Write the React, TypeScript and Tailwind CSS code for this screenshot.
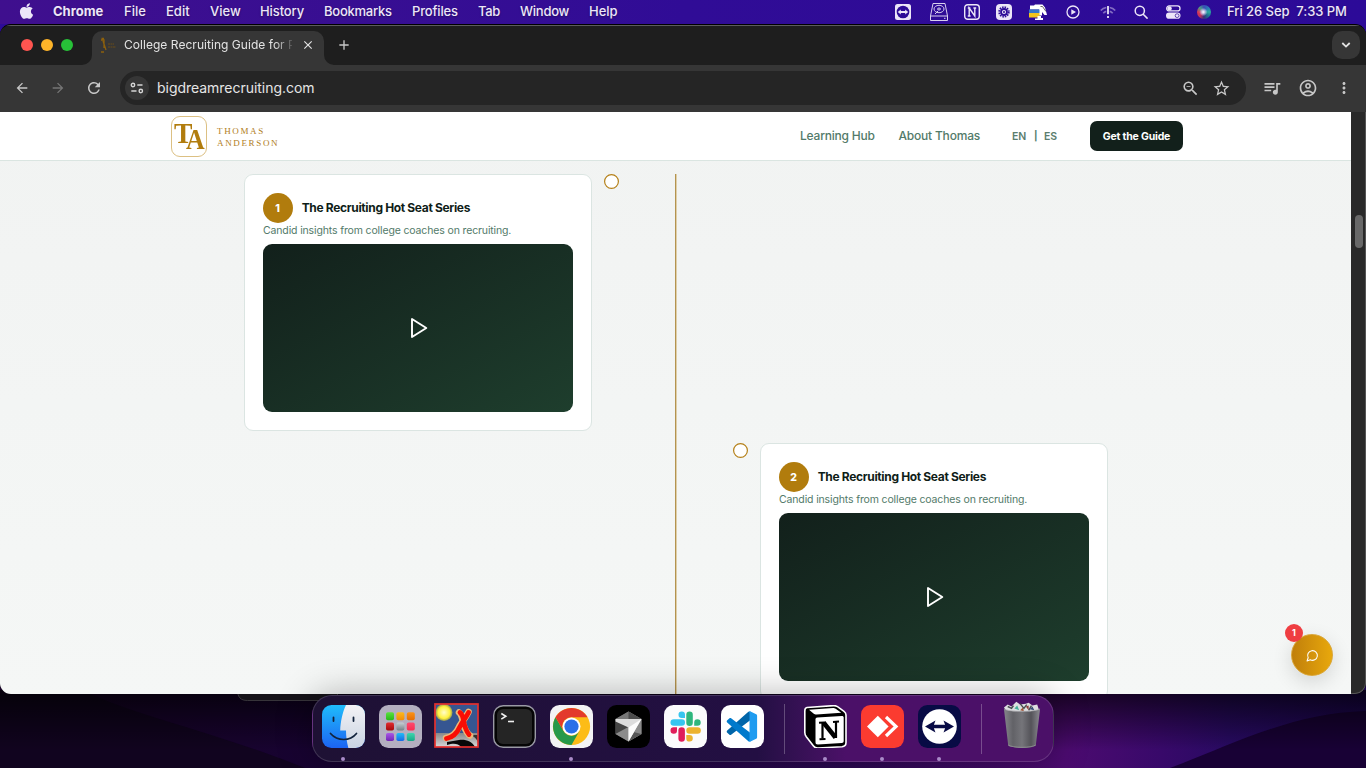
import type { ReactNode } from 'react';
import { FaApple } from 'react-icons/fa';
import {
  MdArrowBack,
  MdArrowForward,
  MdRefresh,
  MdQueueMusic,
  MdOutlineZoomOut,
  MdStarOutline,
  MdOutlineAccountCircle,
  MdMoreVert,
  MdClose,
  MdAdd,
} from 'react-icons/md';

function MenuBar() {
  return (
    <div className="flex h-6 shrink-0 items-center bg-linear-to-r from-[#3f0f8e] via-[#300c96] to-[#2c0a98] text-[13px] font-medium text-[#ece6f8] [text-shadow:0_1px_2px_rgba(0,0,0,0.35)]">
      <FaApple className="mb-0.5 ml-[19px] h-[18px] w-[15px] text-[#ece6f8]" />
      <div className="ml-[19px] flex">
        <span className="w-[71px] font-bold">Chrome</span>
        <span className="w-[42px]">File</span>
        <span className="w-[44px]">Edit</span>
        <span className="w-[50px]">View</span>
        <span className="w-16 tracking-[-0.1px]">History</span>
        <span className="w-[88px] tracking-[-0.25px]">Bookmarks</span>
        <span className="w-[66px] tracking-[-0.15px]">Profiles</span>
        <span className="w-[42px] tracking-[-0.3px]">Tab</span>
        <span className="w-[69px] tracking-[-0.25px]">Window</span>
        <span>Help</span>
      </div>
      <div className="ml-auto flex items-center text-[#ece6f8]">
        <svg width="16" height="16" viewBox="0 0 16 16">
          <rect width="16" height="16" rx="2.5" fill="#ece6f8" />
          <circle cx="8" cy="8" r="6.3" fill="#2d0b97" />
          <path d="M2.8 8l3-2.6v1.7h4.4V5.4l3 2.6-3 2.6V8.9H5.8v1.7z" fill="#ece6f8" />
        </svg>
        <svg className="ml-[19px]" width="18" height="18" viewBox="0 0 18 18" fill="none" stroke="#d9d0ee" strokeWidth="1">
          <path d="M3 .5h12l2.5 12.5v4.5H.5V13zM.5 13h17" />
          <ellipse cx="9" cy="6" rx="5" ry="3.7" />
          <ellipse cx="9" cy="6" rx="1.5" ry="1" />
          <path d="M5 11l3-3M14 15.3h1.5" />
        </svg>
        <svg className="ml-4" width="16" height="16" viewBox="0 0 16 16">
          <rect x=".7" y=".7" width="14.6" height="14.6" rx="3" fill="none" stroke="#ece6f8" strokeWidth="1.4" />
          <path d="M5.2 12V4l5.6 8V4M3.8 4h2.6M3.8 12h2.8M9.4 4h2.8" fill="none" stroke="#ece6f8" strokeWidth="1.4" />
        </svg>
        <svg className="ml-4" width="16" height="16" viewBox="0 0 16 16">
          <rect width="16" height="16" rx="4" fill="#ece6f8" />
          <circle cx="8" cy="8" r="4.8" fill="none" stroke="#2d0b97" strokeWidth="1.8" strokeDasharray="1.5 1.013" />
          <circle cx="8" cy="8" r="3" fill="none" stroke="#2d0b97" strokeWidth="1.8" />
          <circle cx="8" cy="8" r="1" fill="#2d0b97" />
        </svg>
        <svg className="ml-[17px]" width="19" height="16" viewBox="0 0 19 16">
          <path d="M1 1.500h4L6 .500h7.500l2.500 3 2 7.500h-2.500l-2.500-3v3.500h-3V5.500H1z" fill="#fff" />
          <path d="M11.500 2.500h2l3.500 5" stroke="#444" strokeWidth=".8" fill="none" />
          <path d="M0 5.500h10.500V9H0z" fill="#3478c8" />
          <path d="M0 9h10.500v4.500H0z" fill="#f2c51b" />
          <path d="M8.500 12h3.500v2h2v2H6v-1.500h2.500z" fill="#fff" />
        </svg>
        <svg className="ml-[18px]" width="14" height="14" viewBox="0 0 14 14">
          <circle cx="7" cy="7" r="6" fill="none" stroke="#ece6f8" strokeWidth="1.3" />
          <path d="M5.300 4.300L10 7 5.300 9.700z" fill="#ece6f8" />
        </svg>
        <svg className="ml-5" width="16" height="13" viewBox="0 0 16 13" fill="none" stroke="#ece6f8" strokeWidth="1.7">
          <g opacity=".45">
            <path d="M.8 4.500C2.400 2.700 4.200 1.800 6.300 1.500M15.200 4.500C13.600 2.700 11.800 1.800 9.700 1.500" />
            <path d="M3.300 7.200c.9-1 2-1.600 3-1.800M12.700 7.200c-.9-1-2-1.600-3-1.800" />
          </g>
          <path d="M8 0v8.300M8 10v2" strokeWidth="1.8" />
        </svg>
        <svg className="ml-[18px]" width="14" height="14" viewBox="0 0 14 14" fill="none" stroke="#ece6f8" strokeWidth="1.500">
          <circle cx="5.800" cy="5.800" r="4.600" />
          <path d="M9.200 9.200l3.900 3.900" strokeLinecap="round" />
        </svg>
        <svg className="ml-[18px]" width="15" height="14" viewBox="0 0 15 14">
          <rect x=".7" y=".9" width="13.300" height="5" rx="2.500" fill="none" stroke="#ece6f8" strokeWidth="1.300" />
          <circle cx="3.600" cy="3.400" r="2.200" fill="#ece6f8" />
          <rect y="7.500" width="14.500" height="6.300" rx="3.100" fill="#ece6f8" />
          <circle cx="11.100" cy="10.650" r="1.900" fill="#ece6f8" stroke="#2d0b97" strokeWidth=".7" />
        </svg>
        <span className="ml-4 size-3.5 rounded-full bg-[radial-gradient(circle_at_45%_50%,#fff_0%,#c9c5ea_14%,transparent_40%),conic-gradient(#3b4bb8,#2b79b5,#29a8a0,#1e6f90,#35307a,#c0305e,#d83a56,#4a9a86,#3b4bb8)]" />
        <span className="ml-4 mr-[18px] w-[121px] whitespace-pre tracking-[-0.050px]">Fri 26 Sep  7:33 PM</span>
      </div>
    </div>
  );
}

function TabStrip() {
  return (
    <div className="flex h-10 shrink-0 items-end bg-[#1e1e1e] shadow-[inset_0_1px_0_#5c5c5c]">
      <div className="ml-[21px] mb-[14px] flex gap-2">
        <span className="size-3 rounded-full bg-[#ff5550]" />
        <span className="size-3 rounded-full bg-[#feb429]" />
        <span className="size-3 rounded-full bg-[#27c138]" />
      </div>
      <svg className="ml-[9px]" width="10" height="10" viewBox="0 0 10 10">
        <path d="M10 0v10H0A10 10 0 0 0 10 0z" fill="#363636" />
      </svg>
      <div className="flex h-[34px] w-[232px] items-center rounded-t-[10px] bg-[#363636] pb-1.5">
        <svg className="ml-2" width="16" height="16" viewBox="0 0 16 16">
          <path d="M1 3h3v8M3 4l3 9M1.500 1.500H4M1 15h3" stroke="#8d600c" strokeWidth="1.300" fill="none" />
          <path d="M8 7h6M8 10h8" stroke="#6a4c18" strokeWidth="1.200" strokeDasharray="2 .5" />
        </svg>
        <span className="ml-2 w-[168px] whitespace-nowrap text-[12px] tracking-[0.040px] text-[#e3e3e3] [mask-image:linear-gradient(to_right,black_150px,transparent_172px)]">
          College Recruiting Guide for P
        </span>
        <MdClose className="ml-[9px] size-3.5 text-[#e3e3e3]" />
      </div>
      <svg width="10" height="10" viewBox="0 0 10 10">
        <path d="M0 0v10h10A10 10 0 0 1 0 0z" fill="#363636" />
      </svg>
      <MdAdd className="mb-3 ml-0.5 size-4 text-[#c7c7c7]" />
      <div className="mb-1.5 ml-auto mr-1.5 flex size-7 items-center justify-center rounded-[10px] bg-[#363636]">
        <svg width="10" height="6" viewBox="0 0 10 6" fill="none" stroke="#e3e3e3" strokeWidth="1.800">
          <path d="M1.300 1L5 4.600 8.700 1" />
        </svg>
      </div>
    </div>
  );
}

function Toolbar() {
  return (
    <div className="flex h-[47px] shrink-0 items-center bg-[#363636] pb-px text-[#c7c7c7]">
      <MdArrowBack className="ml-3.5 size-4" />
      <MdArrowForward className="ml-5 size-4 text-[#757575]" />
      <MdRefresh className="ml-[19px] size-[18px]" />
      <div className="ml-[17px] flex h-[34px] w-[1126px] items-center rounded-full bg-[#252525]">
        <div className="ml-[5px] flex size-6 items-center justify-center rounded-full bg-[#363636]">
          <svg width="14" height="12" viewBox="0 0 14 12" fill="none" stroke="#d6d6d6" strokeWidth="1.400">
            <circle cx="3" cy="3" r="1.700" />
            <path d="M7.300 3h5.200" />
            <circle cx="10.800" cy="9" r="1.700" />
            <path d="M1.300 9h5.200" />
          </svg>
        </div>
        <span className="-mt-px ml-2 text-[14px] tracking-[-0.030px] text-[#e6e6e6]">bigdreamrecruiting.com</span>
        <MdOutlineZoomOut className="ml-auto size-[19px]" />
        <MdStarOutline className="ml-3 mr-[15px] size-[19px]" />
      </div>
      <MdQueueMusic className="ml-4 size-[20px]" />
      <MdOutlineAccountCircle className="ml-4 size-[20px]" />
      <MdMoreVert className="ml-[17px] size-[18px]" />
    </div>
  );
}

function SiteHeader() {
  return (
    <header className="flex h-[49px] shrink-0 items-center border-b border-[#dae5e1] bg-white">
      <div className="ml-[171px] flex h-[41px] w-9 rounded-[9px] border border-[#dcc083] font-['Liberation_Serif',serif] text-[30px] font-bold leading-none text-[#b17c0d]">
        <span className="ml-[1.500px] mt-px w-[12.500px] origin-top-left scale-x-[0.92]">T</span>
        <span className="mt-[7px] w-5 origin-top-left scale-x-[0.86]">A</span>
      </div>
      <div className="ml-2.5 mt-[3px] font-['Liberation_Serif',serif] text-[9px] leading-[11.500px] tracking-[1.650px] text-[#b07d1c]">
        <div>THOMAS</div>
        <div>ANDERSON</div>
      </div>
      <nav className="ml-auto mr-[168px] flex items-center text-[12px] font-medium text-[#527a69]">
        <a className="w-[98.500px] tracking-[-0.200px]">Learning Hub</a>
        <a className="w-[113.500px] tracking-[-0.200px]">About Thomas</a>
        <span className="mt-px w-[22px] text-[10.500px] font-semibold tracking-[-0.100px] text-[#5b7d6e]">EN</span>
        <span className="mt-px w-2.5 text-[9.500px] font-bold">|</span>
        <span className="mt-px w-[46px] text-[10.500px] font-semibold tracking-[-0.100px] text-[#5b7d6e]">ES</span>
        <button className="h-[30px] w-[93px] rounded-[7px] bg-[#12201b] pt-px text-[10.500px] font-bold tracking-[-0.180px] text-white">Get the Guide</button>
      </nav>
    </header>
  );
}

function Card({ n }: { n: number }) {
  return (
    <article className="h-[257px] w-[348px] rounded-[9px] border border-[#dbe5e2] bg-white px-[18px] pt-[18px]">
      <div className="flex items-center">
        <span className="flex size-[30px] items-center justify-center rounded-full bg-[#b17c0d] pt-px pr-px text-[10.500px] font-extrabold text-white">{n}</span>
        <h3 className="ml-[8.700px] text-[12px] font-bold tracking-[-0.340px] text-[#0f1d18]">The Recruiting Hot Seat Series</h3>
      </div>
      <p className="h-[21px] text-[10.500px] leading-[16px] tracking-[-0.140px] text-[#527a69]">Candid insights from college coaches on recruiting.</p>
      <div className="flex h-[168px] items-center justify-center rounded-[9px] bg-linear-to-br from-[#12201b] to-[#1e3e2d] pl-0.5">
        <svg width="18" height="22" viewBox="0 0 18 22" fill="none" stroke="#fff" strokeWidth="1.900" strokeLinejoin="round">
          <path d="M2 2v18L16.300 11z" />
        </svg>
      </div>
    </article>
  );
}

function Marker() {
  return (
    <svg width="15" height="15" viewBox="0 0 15 15">
      <circle cx="7.500" cy="7.500" r="6.900" fill="#fff" stroke="#b5811a" strokeWidth="1.200" />
    </svg>
  );
}

function Page() {
  return (
    <div className="flex min-h-0 flex-1">
      <div className="relative flex w-[1351px] flex-col overflow-hidden bg-linear-to-b from-[#f1f3f2] to-[#f5f7f6]">
        <SiteHeader />
        <main className="ml-[244px] mt-[13px] grid w-[864px] grid-cols-[431px_2px_431px] grid-rows-[269px_257px]">
          <div className="col-start-1 row-start-1 flex gap-3">
            <Card n={1} />
            <Marker />
          </div>
          <div className="col-start-2 row-span-2 row-start-1 border-r border-[#dfcfa9] bg-[#b39350]" />
          <div className="col-start-3 row-start-2 flex justify-end gap-3">
            <Marker />
            <Card n={2} />
          </div>
        </main>
        <div className="absolute left-[1291px] top-[522px] flex size-[42px] items-center justify-center rounded-full border border-[#d9a63a] bg-linear-to-r from-[#c07f0b] to-[#e8a80c] shadow-[0_6px_20px_rgba(0,0,0,0.14)]">
          <svg width="13" height="13" viewBox="0 0 24 24" fill="none" stroke="#fff" strokeWidth="2" strokeLinejoin="round">
            <path d="M7.900 20A9 9 0 1 0 4 16.100L2 22z" />
          </svg>
        </div>
        <span className="absolute left-[1285px] top-[512px] flex size-[18px] items-center justify-center rounded-full bg-[#ef3e42] text-[9px] font-bold text-white">1</span>
      </div>
      <div className="flex flex-1 justify-center rounded-br-[11px] border-b border-r border-[#555] bg-[#292929] pl-0.5">
        <span className="mt-[103px] h-[33px] w-2 rounded-full bg-[#686868]" />
      </div>
    </div>
  );
}

function DockItem({ open, children, last }: { open?: boolean; last?: boolean; children: ReactNode }) {
  return (
    <div className={last ? 'flex w-[43px] flex-col items-center' : 'mr-3.5 flex w-[43px] flex-col items-center'}>
      {children}
      {open && <span className="mr-px mt-[9px] size-1 rounded-full bg-[#a98bc8]" />}
    </div>
  );
}

function Finder() {
  return (
    <svg width="43" height="43" viewBox="0 0 43 43">
      <defs>
        <linearGradient id="finder" x1="0" y1="0" x2="0" y2="1"><stop stopColor="#1fbcfb" /><stop offset="1" stopColor="#1c63f2" /></linearGradient>
        <linearGradient id="face" x1="0" y1="0" x2="0" y2="1"><stop stopColor="#f3f2f5" /><stop offset="1" stopColor="#c9d3e2" /></linearGradient>
        <clipPath id="tile"><rect width="43" height="43" rx="9.500" /></clipPath>
      </defs>
      <g clipPath="url(#tile)">
        <rect width="43" height="43" fill="url(#finder)" />
        <path d="M24 0C20.500 7 18.500 17 18.200 25.500H24c0 6 .8 12 2.500 18H43V0z" fill="url(#face)" />
        <path d="M11.500 12.500v3.500M31.500 12.500v3.500" stroke="#12233c" strokeWidth="1.800" strokeLinecap="round" />
        <path d="M8.500 28.500c7 8 19.500 8 26 0" fill="none" stroke="#12233c" strokeWidth="1.700" strokeLinecap="round" />
      </g>
    </svg>
  );
}

function Launchpad() {
  const tiles = [
    ['#5be23e', '#29b918'], ['#fdb91c', '#f28d08'], ['#fb9316', '#e66c04'],
    ['#e22a2e', '#a3080d'], ['#c6ced3', '#747f86'], ['#ff4a6e', '#f72d50'],
    ['#a957e8', '#7224b5'], ['#22bdf6', '#1768e8'], ['#3fd6ae', '#15a987'],
  ];
  return (
    <svg width="43" height="43" viewBox="0 0 43 43">
      <rect width="43" height="43" rx="9.500" fill="#b4afc0" />
      {tiles.map(([a, b], i) => (
        <g key={i}>
          <linearGradient id={'lp' + i} x1="0" y1="0" x2="0" y2="1"><stop stopColor={a} /><stop offset="1" stopColor={b} /></linearGradient>
          <rect x={7 + (i % 3) * 10.400} y={7.200 + Math.floor(i / 3) * 10.400} width="8" height="8" rx="1.800" fill={`url(#lp${i})`} />
        </g>
      ))}
    </svg>
  );
}

function XQuartz() {
  return (
    <svg className="-mt-0.5 mr-0.5 shrink-0" width="45" height="45" viewBox="0 0 45 45">
      <defs>
        <radialGradient id="sun"><stop stopColor="#fffccd" /><stop offset=".7" stopColor="#fff13c" /><stop offset="1" stopColor="#f6df22" stopOpacity=".5" /></radialGradient>
        <linearGradient id="floor" x1="0" y1="0" x2="0" y2="1"><stop stopColor="#888" /><stop offset="1" stopColor="#ddd" /></linearGradient>
        <clipPath id="xq"><rect x="1" y="1" width="43" height="43" /></clipPath>
      </defs>
      <g clipPath="url(#xq)">
        <rect width="45" height="45" fill="#365691" />
        <rect y="30" width="45" height="15" fill="url(#floor)" />
        <circle cx="10" cy="9.500" r="8.500" fill="url(#sun)" />
        <path d="M13 39l12-2c6-1 13 1 16 7H27c-3-4-8-4-14-2z" fill="#080808" />
        <path d="M34 32c5 0 8 3 10 7v-7z" fill="#333" />
        <path d="M25 9.500c4 3 3 9 5 14 2 5 3 7 6 9M34.500 9c-3 6-6 9-9 14-3 7-8 11-13.500 12" stroke="#edb879" strokeWidth="6.500" fill="none" strokeLinecap="round" />
        <path d="M26 9.500c4 3 3 9 5 14 1.500 4 2 6 4 8M34.500 9.500c-3 6-6 9-8.500 14-3 7-8 11-13.500 12" stroke="#f90d04" strokeWidth="4.800" fill="none" strokeLinecap="round" />
      </g>
      <rect x="1" y="1" width="43" height="43" fill="none" stroke="#e5302d" strokeWidth="1.700" />
    </svg>
  );
}

function Terminal() {
  return (
    <svg width="43" height="43" viewBox="0 0 43 43">
      <rect x=".7" y=".7" width="41.600" height="41.600" rx="9.500" fill="#050505" stroke="#9a9aa5" strokeWidth="1.400" />
      <rect x="4" y="4" width="35" height="35" rx="6" fill="#252525" />
      <path d="M8.300 8.500l4.500 2.800-4.500 2.800" fill="none" stroke="#f0f0f0" strokeWidth="1.600" />
      <path d="M15 16.500h6" stroke="#f0f0f0" strokeWidth="1.600" />
    </svg>
  );
}

function Chrome() {
  return (
    <svg width="43" height="43" viewBox="-21.500 -21.500 43 43">
      <rect x="-21.500" y="-21.500" width="43" height="43" rx="9.500" fill="#f3f3f4" />
      <circle r="18.600" fill="#fcbc17" />
      <path d="M-16 -9.250A18.500 18.500 0 0 0 0 18.500L8 4.600A9.250 9.250 0 0 1 -8 4.600z" fill="#26994a" />
      <path d="M-16 -9.250A18.500 18.500 0 0 1 16 -9.250H0A9.250 9.250 0 0 0 -8 4.600z" fill="#e33a2c" />
      <circle r="9" fill="#fff" />
      <circle r="7.100" fill="#2a6fe8" />
    </svg>
  );
}

function Cursor() {
  return (
    <svg width="43" height="43" viewBox="0 0 43 43">
      <rect width="43" height="43" rx="9.500" fill="#000" />
      <path d="M21.500 6.500L8.500 14v15l13 7.500 13-7.500V14z" fill="#5d5d5d" />
      <path d="M21.500 6.500L8.500 14h26z" fill="#787878" />
      <path d="M21.500 6.500v8L34.500 14z" fill="#4c4c4c" />
      <path d="M8.500 14v15l13-7z" fill="#444" />
      <path d="M8.500 29l13-7v14.500z" fill="#8c8c8c" />
      <path d="M34.500 14v15l-13 7.500z" fill="#8a8a8a" />
      <path d="M34.500 29l-8-2-5 9.500z" fill="#555" />
      <path d="M8.500 16.500V14h26L21.500 36.500V22.500z" fill="#dcdcdc" />
      <path d="M34.500 14l-13 22.500V22.500z" fill="#fbfbfb" />
    </svg>
  );
}

function Slack() {
  return (
    <svg width="43" height="43" viewBox="0 0 43 43">
      <rect width="43" height="43" rx="9.500" fill="#fbfbfc" />
      <rect x="6.500" y="14.300" width="14.500" height="6.500" rx="3.250" fill="#36c5f0" />
      <path d="M21 13h-3.200a3.250 3.250 0 1 1 3.200-3.300z" fill="#36c5f0" />
      <rect x="22.300" y="6.500" width="6.500" height="14.500" rx="3.250" fill="#2eb67d" />
      <path d="M30.200 20.800v-3.200a3.250 3.250 0 1 1 3.300 3.200z" fill="#2eb67d" />
      <rect x="22.300" y="22.200" width="14.500" height="6.500" rx="3.250" fill="#ecb22e" />
      <path d="M22.300 30.100h3.200a3.250 3.250 0 1 1-3.200 3.300z" fill="#ecb22e" />
      <rect x="14.400" y="22.200" width="6.500" height="14.500" rx="3.250" fill="#e01e5a" />
      <path d="M13 22.200v3.200a3.250 3.250 0 1 1-3.300-3.200z" fill="#e01e5a" />
    </svg>
  );
}

function VsCode() {
  return (
    <svg width="43" height="43" viewBox="0 0 43 43">
      <rect width="43" height="43" rx="9.500" fill="#fff" />
      <path d="M6 27.500l2.500 2.300c.5.400 1 .4 1.600 0L29.500 15V6.500c-1-.3-2 0-2.700.7L6.200 25.600c-.6.600-.6 1.300-.2 1.900z" fill="#0065a9" />
      <path d="M6 15.500l2.500-2.300c.5-.4 1-.4 1.600 0L29.500 28v8.500c-1 .3-2 0-2.700-.7L6.200 17.400c-.6-.6-.6-1.300-.2-1.900z" fill="#007acc" />
      <path d="M27 36c1 .7 1.700.7 2.500.4l5.700-2.700c.6-.3.900-.8.900-1.500V10.800c0-.7-.3-1.200-.9-1.500l-5.700-2.700C28.700 6.300 28 6.300 27 7c.7-.3 1.500.2 1.500 1v27c0 .8-.8 1.300-1.500 1z" fill="#1f9cf0" />
    </svg>
  );
}

function Notion() {
  return (
    <svg width="43" height="43" viewBox="0 0 43 43">
      <path d="M3 2.500L29.500.600c1.500-.1 2.700.2 4 1.100l6.500 4.700c1.400 1 2 2 2 3.600v27.500c0 2.700-1.400 4-4 4.200L14 43c-2 .1-3.300-.4-4.500-2L2.300 31.700C1.200 30.200.8 29 .8 27.500V6c0-2 .7-3.300 2.200-3.500z" fill="#000" stroke="#fff" strokeWidth="1.600" />
      <path d="M5 4.800l24-1.800c1.200 0 1.800.1 2.700.8l5.500 4L12.500 9.500c-1.200 0-2-.1-3-1z" fill="#fff" />
      <path d="M11.500 14.500c0-1.200.6-1.900 1.800-2l24.500-1.600c1.300 0 1.900.6 1.900 1.800v23.300c0 1.200-.7 1.900-1.900 2L13.800 39.500c-1.500 0-2.300-.6-2.300-2.200z" fill="#fff" />
      <path d="M18.500 18v15.500M32 17v16" fill="none" stroke="#000" strokeWidth="2.200" />
      <path d="M19.500 17.500l12 15" fill="none" stroke="#000" strokeWidth="4.500" />
      <path d="M15 17.800l5.500-.4M15.500 34.300l6-.4M29 16.900l6-.4" fill="none" stroke="#000" strokeWidth="2" />
    </svg>
  );
}

function AnyDesk() {
  return (
    <svg width="43" height="43" viewBox="0 0 43 43">
      <rect width="43" height="43" rx="9.500" fill="#fb3b30" />
      <path d="M16.800 10.800L27.600 21.500 16.800 32.200 6 21.500z" fill="#fff" />
      <path d="M24 12l10 9.500L24 31" transform="translate(1 0)" fill="none" stroke="#fff" strokeWidth="3.200" />
    </svg>
  );
}

function TeamViewer() {
  return (
    <svg width="43" height="43" viewBox="0 0 43 43">
      <rect width="43" height="43" rx="9.500" fill="#080b45" />
      <circle cx="21.500" cy="21.500" r="17.300" fill="#fff" />
      <path d="M7 21.500l10.500-6-1.600 4.200h11.200l-1.600-4.200 10.500 6-10.500 6 1.600-4.200H15.900l1.600 4.200z" fill="#080b45" />
    </svg>
  );
}

function Trash() {
  return (
    <svg className="-mt-1 mr-0.5" width="38" height="49" viewBox="0 0 40 50">
      <defs>
        <linearGradient id="bin" x1="0" y1="0" x2="1" y2="0">
          <stop stopColor="#85858b" /><stop offset=".25" stopColor="#626267" /><stop offset=".5" stopColor="#75757a" /><stop offset=".75" stopColor="#545359" /><stop offset="1" stopColor="#8b8a91" />
        </linearGradient>
      </defs>
      <path d="M1 6l4-3 4 2 5-5 4 3 6-1 3-1 4 3 5-1 2 6-7 5H7z" fill="#dedfe1" />
      <path d="M5 5l4 2 2-3M18 2l4 5 3-4M30 4l-3 5" fill="none" stroke="#4a5052" strokeWidth="1.500" />
      <path d="M12 7l3-3 2 5z" fill="#47b29b" />
      <path d="M18 9l3-3 1 4z" fill="#a05434" />
      <path d="M24 5l3-1v5z" fill="#8f3d3c" />
      <path d="M28 8l3-3 2 4z" fill="#374e78" />
      <path d="M1 7.500c5 3.500 33 3.500 38 0L34.500 46c-3 3.600-26 3.600-29 0z" fill="url(#bin)" />
      <path d="M1 7.500c5 3.500 33 3.500 38 0" fill="none" stroke="#a7a7ac" strokeWidth=".8" />
      <path d="M5.500 45.500c5 3.300 24 3.300 29 0" fill="none" stroke="#96969b" strokeWidth=".8" />
    </svg>
  );
}

function Dock() {
  return (
    <div className="relative ml-[312px] mt-px flex h-[67px] w-[742px] rounded-[20px] border border-white/15 bg-linear-to-r from-[#1e1134] via-[#230f43] via-60% to-[#4b1068] to-72% pl-[9px] pt-[9px] shadow-[0_0_36px_rgba(0,0,0,0.3)]">
      <DockItem open><Finder /></DockItem>
      <DockItem><Launchpad /></DockItem>
      <DockItem><XQuartz /></DockItem>
      <DockItem><Terminal /></DockItem>
      <DockItem open><Chrome /></DockItem>
      <DockItem><Cursor /></DockItem>
      <DockItem><Slack /></DockItem>
      <DockItem last><VsCode /></DockItem>
      <span className="-mt-px ml-5 mr-[19px] h-[50px] w-px bg-white/25" />
      <DockItem open><Notion /></DockItem>
      <DockItem open><AnyDesk /></DockItem>
      <DockItem open last><TeamViewer /></DockItem>
      <span className="-mt-px ml-5 mr-[19px] h-[50px] w-px bg-white/25" />
      <DockItem last><Trash /></DockItem>
    </div>
  );
}

function Wallpaper() {
  return (
    <svg className="absolute inset-0" width="1366" height="768" viewBox="0 0 1366 768">
      <defs>
        <linearGradient id="sky">
          <stop stopColor="#180328" /><stop offset=".18" stopColor="#18032f" /><stop offset=".3" stopColor="#160333" /><stop offset=".62" stopColor="#2b0851" /><stop offset=".78" stopColor="#4c0b70" /><stop offset=".85" stopColor="#38096a" /><stop offset=".9" stopColor="#280a62" /><stop offset="1" stopColor="#1d0553" />
        </linearGradient>
        <linearGradient id="shade" x1="0" y1="0" x2="0" y2="1"><stop stopColor="#000" stopOpacity=".7" /><stop offset="1" stopColor="#000" stopOpacity="0" /></linearGradient>
      </defs>
      <rect width="1366" height="768" fill="#2d0b97" />
      <rect y="680" width="1366" height="88" fill="url(#sky)" />
      <path d="M0 694h90c55 24 130 40 215 74H0z" fill="#11041f" />
      <path d="M1170 768c60-22 120-55 196-57v57z" fill="#180135" />
      <rect y="690" width="1366" height="60" fill="url(#shade)" />
      <path d="M237.500 690c0 7 3 10.500 10 10.500h90v-10.500z" fill="#151218" stroke="#37343a" strokeWidth="1" />
    </svg>
  );
}

export default function App() {
  return (
    <div className="relative flex h-[768px] w-[1366px] flex-col overflow-hidden bg-black font-['Inter',sans-serif]">
      <Wallpaper />
      <div className="relative flex h-full flex-col">
        <MenuBar />
        <div className="flex h-[670px] shrink-0 flex-col overflow-hidden rounded-[11px] border-t border-black bg-[#1e1e1e]">
          <TabStrip />
          <Toolbar />
          <Page />
        </div>
        <Dock />
      </div>
    </div>
  );
}
